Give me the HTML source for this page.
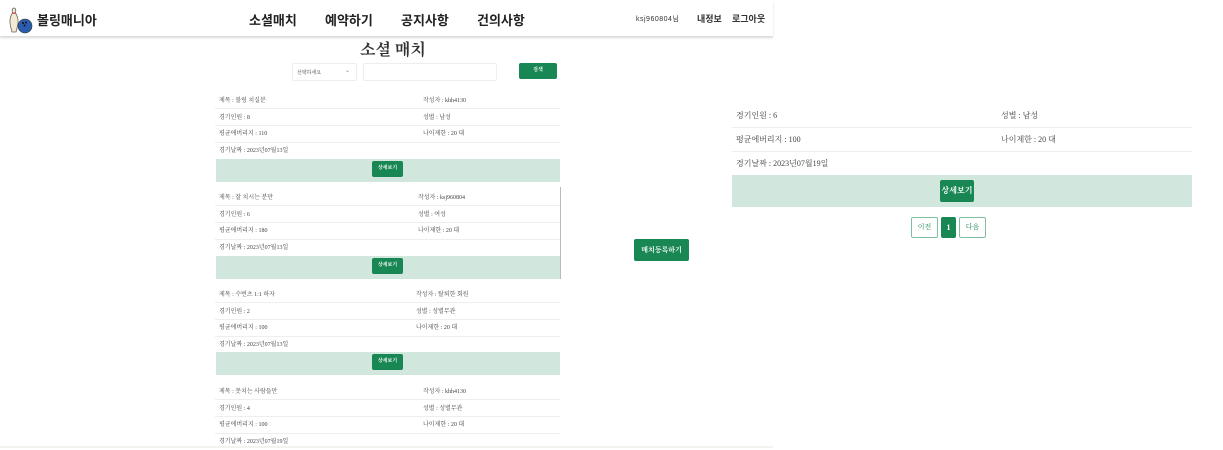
<!DOCTYPE html>
<html><head><meta charset="utf-8">
<style>
*{margin:0;padding:0;box-sizing:border-box}
body{width:1223px;height:450px;background:#fff;position:relative;overflow:hidden;font-family:"Liberation Serif","Noto Serif CJK KR","Noto Serif CJK SC",serif;color:#333}
.a{position:absolute}
.hdr{left:0;top:0;width:773px;height:36px;background:#fff;box-shadow:0 2px 2px rgba(0,0,0,.15)}
.sans{font-family:"Liberation Sans","Noto Sans CJK KR",sans-serif}
.nav{top:10px;font-size:13px;font-weight:bold;color:#222}
.t{font-size:6px;color:#444;white-space:nowrap}
.c .t{margin-top:-2px}
.line{height:1px;background:#eee}
.band{background:#d1e7dd}
.btn{background:#198754;color:#fff;border-radius:2px;font-size:5px;text-align:center;font-weight:bold}
</style></head><body>
<div class="a hdr"></div>
<svg class="a" style="left:8px;top:6px" width="26" height="28" viewBox="0 0 26 28">
<path d="M6 2c-2 0-2 3-1.5 5c-1.5 2-3 6-2.5 10c.5 4 1.5 7 2 9h4c.5-2 1.5-5 2-9c.5-4-1-8-2.5-10C8 5 8 2 6 2z" fill="#f3ead6" stroke="#666" stroke-width=".8"/>
<rect x="4.3" y="6.5" width="3.4" height="1.2" fill="#c33"/>
<circle cx="17" cy="20" r="7" fill="#2a5db0" stroke="#333" stroke-width=".6"/>
<circle cx="15" cy="17" r="1" fill="#111"/><circle cx="18" cy="16.5" r="1" fill="#111"/><circle cx="16.5" cy="19.5" r="1" fill="#111"/>
</svg>
<div class="a sans" style="left:37px;top:10px;font-size:13px;font-weight:bold;color:#222">볼링매니아</div>
<div class="a sans nav" style="left:249px">소셜매치</div>
<div class="a sans nav" style="left:325px">예약하기</div>
<div class="a sans nav" style="left:401px">공지사항</div>
<div class="a sans nav" style="left:477px">건의사항</div>
<div class="a sans" style="left:636px;top:14px;font-size:7px;color:#333;letter-spacing:.5px">ksj960804님</div>
<div class="a sans" style="left:697px;top:12px;font-size:9px;font-weight:bold;color:#333">내정보</div>
<div class="a sans" style="left:732px;top:12px;font-size:9px;font-weight:bold;color:#333">로그아웃</div>

<div class="a" style="left:360px;top:37px;font-size:16px;font-weight:bold;color:#333">소셜 매치</div>
<div class="a" style="left:292px;top:63px;width:65px;height:18px;border:1px solid #eee;border-radius:2px"></div>
<div class="a t" style="left:297px;top:69px;font-size:5px">선택하세요</div>
<div class="a t" style="left:345px;top:67px;font-size:6px;color:#888">⌄</div>
<div class="a" style="left:363px;top:63px;width:134px;height:18px;border:1px solid #eee;border-radius:2px"></div>
<div class="a btn" style="left:519px;top:63px;width:38px;height:16px;line-height:16px">검색</div>

<div class="a c" style="left:215px;top:92px;width:345px">
 <div class="a t" style="left:4px;top:5px">제목 : 볼링 치실분</div><div class="a t" style="left:208px;top:5px">작성자 : khh4130</div>
 <div class="a line" style="left:0;top:16px;width:345px"></div>
 <div class="a t" style="left:4px;top:22px">경기인원 : 8</div><div class="a t" style="left:208px;top:22px">성별 : 남성</div>
 <div class="a line" style="left:0;top:33px;width:345px"></div>
 <div class="a t" style="left:4px;top:38px">평균에버리지 : 110</div><div class="a t" style="left:208px;top:38px">나이제한 : 20 대</div>
 <div class="a line" style="left:0;top:50px;width:345px"></div>
 <div class="a t" style="left:4px;top:55px">경기날짜 : 2023년07월13일</div>
 <div class="a band" style="left:1px;top:67px;width:344px;height:23px"></div>
 <div class="a btn" style="left:157px;top:69px;width:31px;height:16px;line-height:16px">상세보기</div>
</div>
<div class="a c" style="left:215px;top:189px;width:345px">
 <div class="a t" style="left:4px;top:5px">제목 : 잘 치시는 분만</div><div class="a t" style="left:203px;top:5px">작성자 : ksj960804</div>
 <div class="a line" style="left:0;top:16px;width:345px"></div>
 <div class="a t" style="left:4px;top:22px">경기인원 : 6</div><div class="a t" style="left:203px;top:22px">성별 : 여성</div>
 <div class="a line" style="left:0;top:33px;width:345px"></div>
 <div class="a t" style="left:4px;top:38px">평균에버리지 : 180</div><div class="a t" style="left:203px;top:38px">나이제한 : 20 대</div>
 <div class="a line" style="left:0;top:50px;width:345px"></div>
 <div class="a t" style="left:4px;top:55px">경기날짜 : 2023년07월13일</div>
 <div class="a band" style="left:1px;top:67px;width:344px;height:23px"></div>
 <div class="a btn" style="left:157px;top:69px;width:31px;height:16px;line-height:16px">상세보기</div>
 <div class="a" style="left:345px;top:-2px;width:1px;height:92px;background:#bbb"></div>
</div>
<div class="a c" style="left:215px;top:286px;width:345px">
 <div class="a t" style="left:4px;top:5px">제목 : 수번츠 1:1 하자</div><div class="a t" style="left:201px;top:5px">작성자 : 탈퇴한 회원</div>
 <div class="a line" style="left:0;top:16px;width:345px"></div>
 <div class="a t" style="left:4px;top:22px">경기인원 : 2</div><div class="a t" style="left:201px;top:22px">성별 : 성별무관</div>
 <div class="a line" style="left:0;top:33px;width:345px"></div>
 <div class="a t" style="left:4px;top:38px">평균에버리지 : 100</div><div class="a t" style="left:201px;top:38px">나이제한 : 20 대</div>
 <div class="a line" style="left:0;top:50px;width:345px"></div>
 <div class="a t" style="left:4px;top:55px">경기날짜 : 2023년07월13일</div>
 <div class="a band" style="left:1px;top:66px;width:344px;height:23px"></div>
 <div class="a btn" style="left:157px;top:68px;width:31px;height:16px;line-height:16px">상세보기</div>
</div>
<div class="a c" style="left:215px;top:383px;width:345px">
 <div class="a t" style="left:4px;top:5px">제목 : 못치는 사람들만</div><div class="a t" style="left:208px;top:5px">작성자 : khh4130</div>
 <div class="a line" style="left:0;top:16px;width:345px"></div>
 <div class="a t" style="left:4px;top:22px">경기인원 : 4</div><div class="a t" style="left:208px;top:22px">성별 : 성별무관</div>
 <div class="a line" style="left:0;top:33px;width:345px"></div>
 <div class="a t" style="left:4px;top:38px">평균에버리지 : 100</div><div class="a t" style="left:208px;top:38px">나이제한 : 20 대</div>
 <div class="a line" style="left:0;top:50px;width:345px"></div>
 <div class="a t" style="left:4px;top:55px">경기날짜 : 2023년07월19일</div>
</div>
<div class="a" style="left:0;top:446px;width:773px;height:2px;background:#f2f2ee"></div>

<div class="a btn" style="left:634px;top:239px;width:55px;height:22px;line-height:22px;font-size:7px">매치등록하기</div>

<div class="a" style="left:732px;top:105px;width:460px">
 <div class="a t" style="left:4px;top:5px;font-size:8px">경기인원 : 6</div><div class="a t" style="left:269px;top:5px;font-size:8px">성별 : 남성</div>
 <div class="a line" style="left:0;top:22px;width:460px"></div>
 <div class="a t" style="left:4px;top:29px;font-size:8px">평균에버리지 : 100</div><div class="a t" style="left:269px;top:29px;font-size:8px">나이제한 : 20 대</div>
 <div class="a line" style="left:0;top:46px;width:460px"></div>
 <div class="a t" style="left:4px;top:53px;font-size:8px">경기날짜 : 2023년07월19일</div>
 <div class="a band" style="left:0;top:70px;width:460px;height:32px"></div>
 <div class="a btn" style="left:208px;top:75px;width:34px;height:22px;line-height:22px;font-size:8px">상세보기</div>
</div>
<div class="a" style="left:911px;top:217px;width:27px;height:21px;border:1px solid #7fbfa0;border-radius:2px;font-size:7px;text-align:center;line-height:19px;color:#198754">이전</div>
<div class="a btn" style="left:941px;top:217px;width:15px;height:21px;line-height:21px;font-size:8px">1</div>
<div class="a" style="left:959px;top:217px;width:27px;height:21px;border:1px solid #7fbfa0;border-radius:2px;font-size:7px;text-align:center;line-height:19px;color:#198754">다음</div>
</body></html>
